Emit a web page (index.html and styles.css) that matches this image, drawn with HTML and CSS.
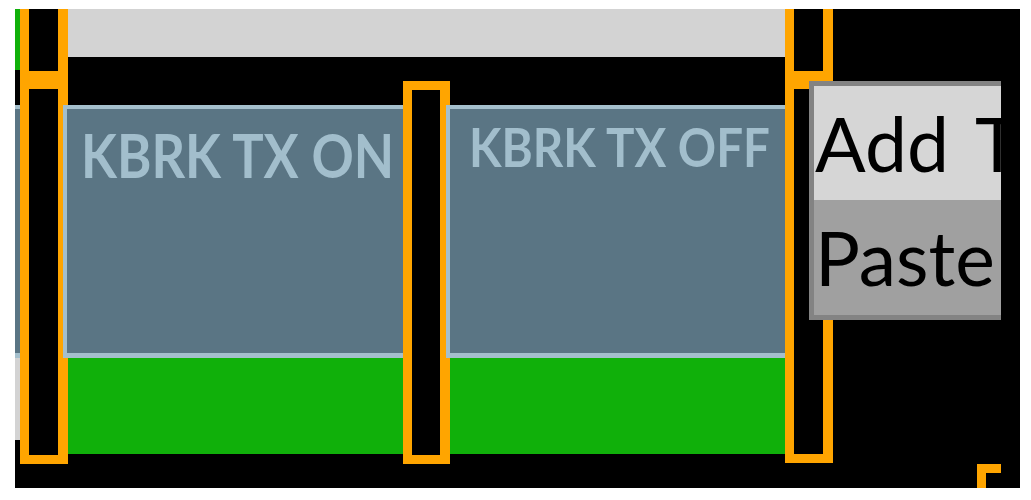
FILE: index.html
```html
<!DOCTYPE html>
<html>
<head>
<meta charset="utf-8">
<link rel="stylesheet" href="styles.css">
</head>
<body>
<div class="stage">
  <div class="viewport">
    <div class="strip">
      <div class="seg seg-green"></div>
      <div class="seg seg-gap"></div>
      <div class="seg seg-slate"></div>
      <div class="seg seg-grey"></div>
    </div>
    <div class="main">
      <div class="row row-top"><div class="bar bar-grey"></div></div>
      <div class="row row-gap"></div>
      <div class="row row-clips">
        <div class="clip clip-on"><span class="clip-label label-on">KBRK TX ON</span></div>
        <div class="clip clip-off"><span class="clip-label label-off">KBRK TX OFF</span></div>
      </div>
      <div class="row row-bottom"><div class="bar bar-green"></div></div>

      <div class="handle h-left-top"></div>
      <div class="handle h-left"></div>
      <div class="handle h-mid"></div>
      <div class="handle h-right-top"></div>
      <div class="handle h-right"></div>
      <div class="handle h-corner"></div>

      <div class="menu">
        <div class="menu-item">Add Track</div>
        <div class="menu-item menu-item-hover">Paste</div>
      </div>
    </div>
  </div>
</div>
</body>
</html>
```
FILE: styles.css
```css
html, body {
  margin: 0;
  padding: 0;
  background: #ffffff;
}

.stage {
  margin: 9px 0 0 15px;
  width: 1005px;
  height: 479px;
  background: #000000;
}

.viewport {
  width: 986px;
  height: 479px;
  overflow: hidden;
  display: flex;
}

.strip {
  width: 5px;
  flex: none;
  display: flex;
  flex-direction: column;
}

.seg-green { height: 61px; background: #10b00a; }
.seg-gap { height: 35px; }
.seg-slate {
  height: 253px;
  box-sizing: border-box;
  background: #5a7584;
  border-top: 4px solid #a4bfcc;
  border-bottom: 5px solid #a4bfcc;
}
.seg-grey { height: 82px; background: #d3d3d3; }

.main {
  position: relative;
  flex: 1;
  height: 479px;
}

.row { display: flex; }
.row-top { height: 48px; }
.row-gap { height: 48px; }
.row-clips { height: 253px; position: relative; z-index: 2; }
.row-bottom { height: 96px; }

.bar { margin-left: 48px; width: 717px; }
.bar-grey { background: #d3d3d3; }
.bar-green { background: #10b00a; }

.clip {
  box-sizing: border-box;
  height: 253px;
  background: #5a7584;
  border-top: 4px solid #a4bfcc;
  border-left: 4px solid #a4bfcc;
  border-bottom: 5px solid #a4bfcc;
  margin-left: 43px;
  overflow: hidden;
}
.clip-on { width: 340px; padding: 8px 0 0 14px; }
.clip-off { width: 339px; padding: 6px 0 0 19px; }

.clip-label {
  display: block;
  font-family: Lato, "Open Sans", sans-serif;
  font-weight: 700;
  color: #a2becc;
  line-height: 1.2;
  white-space: nowrap;
  transform-origin: 0 0;
}
.label-on { font-size: 62px; transform: scaleX(0.845); }
.label-off { font-size: 54px; transform: scaleX(0.879); }

.handle {
  position: absolute;
  box-sizing: border-box;
  border: 9px solid #ffa500;
  border-right-width: 10px;
  background: #000000;
  z-index: 1;
}
.h-left-top { left: 0; top: -20px; width: 48px; height: 91px; }
.h-left { left: 0; top: 71px; width: 48px; height: 384px; }
.h-mid { left: 383px; top: 72px; width: 47px; height: 383px; }
.h-right-top { left: 765px; top: -20px; width: 48px; height: 91px; }
.h-right { left: 765px; top: 71px; width: 48px; height: 383px; }
.h-corner { left: 957px; top: 455px; width: 60px; height: 60px; }

.menu {
  position: absolute;
  left: 789px;
  top: 72px;
  width: 300px;
  z-index: 3;
  border: 5px solid #838383;
  background: #d6d6d6;
}

.menu-item {
  box-sizing: border-box;
  height: 114px;
  padding: 12px 0 0 1px;
  font-family: Lato, "Open Sans", sans-serif;
  font-size: 75px;
  line-height: 1.2;
  word-spacing: 9px;
  color: #000000;
  white-space: nowrap;
}
.menu-item-hover {
  background: #a0a0a0;
  height: 115px;
}
```
